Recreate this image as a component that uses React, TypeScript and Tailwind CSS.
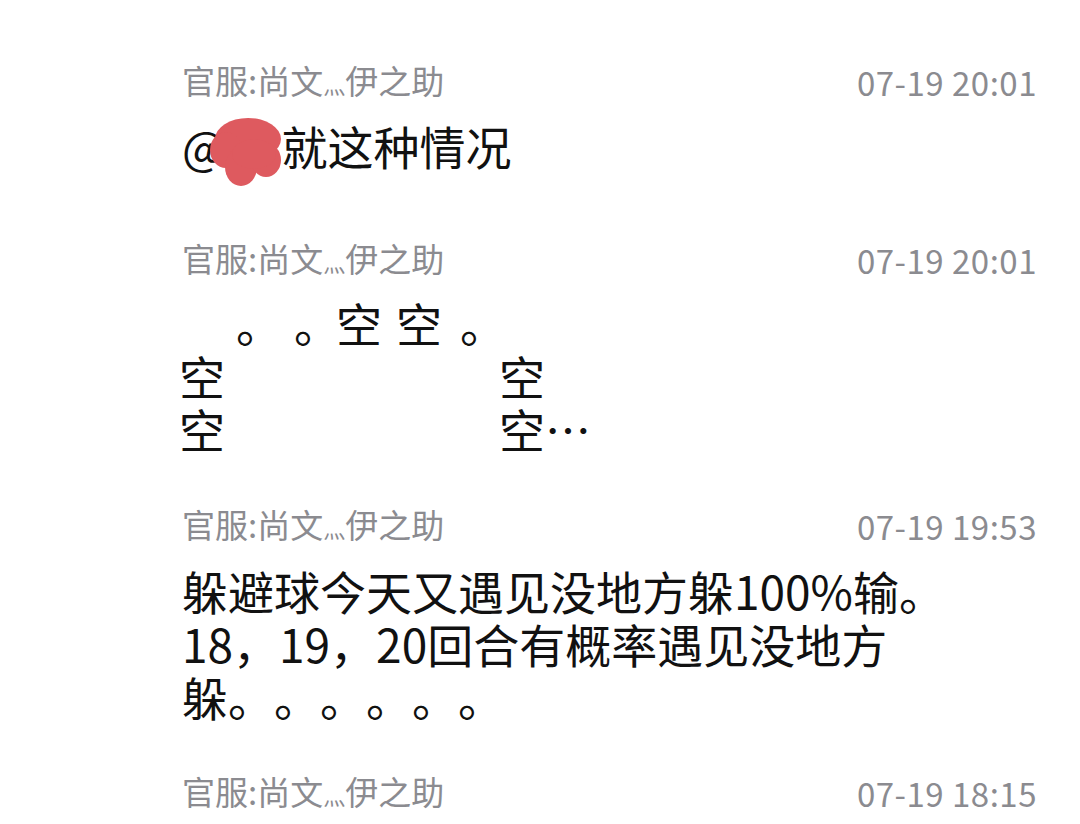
import React from 'react'

const cjk = { fontFamily: '"Noto Sans CJK SC", "Noto Sans", sans-serif' }

function Header({ time, className = '' }: { time: string; className?: string }) {
  return (
    <div className={`flex h-[40px] items-center justify-between text-[33px] leading-[40px] text-[#8b8b90] ${className}`}>
      <span>
        官服:尚文<span className="text-[22px]">灬</span>伊之助
      </span>
      <span className="tracking-[0.5px]">{time}</span>
    </div>
  )
}

// smudge over the mentioned name
function Blob() {
  return (
    <span className="relative inline-block h-[1em] w-[56px] align-baseline">
      <svg
        className="absolute left-[-18px] top-[-3px]"
        width="76"
        height="72"
        viewBox="0 0 76 72"
      >
        <g fill="#de5a5f">
          <ellipse cx="40" cy="23" rx="33" ry="21" />
          <ellipse cx="18" cy="34" rx="16" ry="18" />
          <ellipse cx="33" cy="51" rx="16" ry="19" />
          <ellipse cx="58" cy="44" rx="15" ry="17" />
          <ellipse cx="46" cy="38" rx="22" ry="15" />
        </g>
      </svg>
    </span>
  )
}

export default function App() {
  return (
    <div
      className="min-h-[824px] w-[1080px] overflow-hidden bg-white pl-[182px] pr-[43px] pt-[62px] [text-spacing-trim:space-all]"
      style={cjk}
    >
      {/* 1 */}
      <Header time="07-19 20:01" />
      <div className="mt-[17px] text-[46px] leading-[53px] text-[#111]">
        @<Blob />就这种情况
      </div>

      {/* 2 */}
      <Header time="07-19 20:01" className="mt-[68px]" />
      <div className="mt-[16px] text-[46px] leading-[53px] text-[#111]">
        <div className="flex">
          <span className="ml-[54px]">。</span>
          <span className="ml-[12px]">。</span>
          <span className="ml-[-4px]">空</span>
          <span className="ml-[14px]">空</span>
          <span className="ml-[18px]">。</span>
        </div>
        <div className="flex">
          <span className="ml-[-3px]">空</span>
          <span className="ml-[274px]">空</span>
        </div>
        <div className="flex">
          <span className="ml-[-3px]">空</span>
          <span className="ml-[274px]">空…</span>
        </div>
      </div>

      {/* 3 */}
      <Header time="07-19 19:53" className="mt-[51px]" />
      <div className="mt-[18px] text-[46px] leading-[53px] text-[#111]">
        躲避球今天又遇见没地方躲100%输。
        <br />
        18，19，20回合有概率遇见没地方
        <br />
        躲。。。。。。
      </div>

      {/* 4 */}
      <Header time="07-19 18:15" className="mt-[50px]" />
    </div>
  )
}
